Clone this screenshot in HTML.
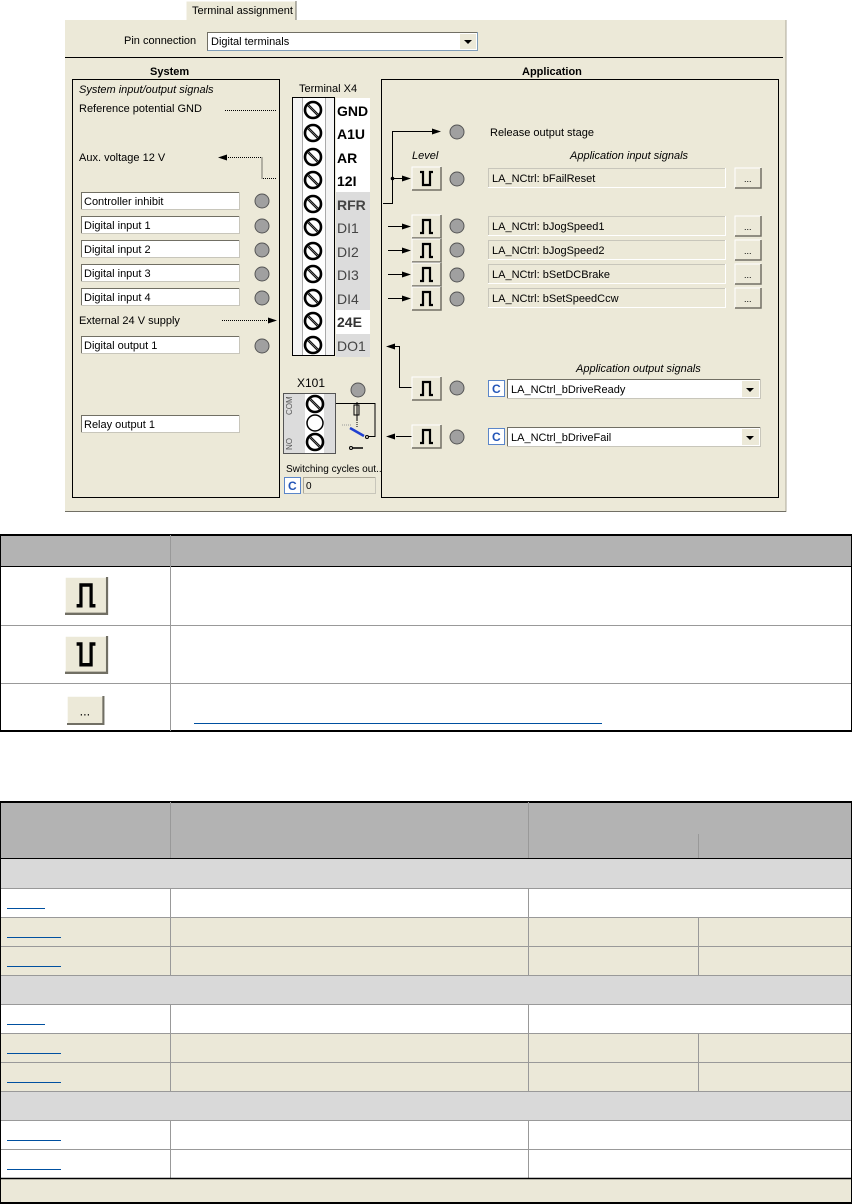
<!DOCTYPE html>
<html><head><meta charset="utf-8"><style>
body{margin:0;background:#fff;width:852px;height:1204px;position:relative;overflow:hidden;font-family:"Liberation Sans",sans-serif}
svg{position:absolute;left:0;top:0}
</style></head><body>
<svg width="852" height="1204" xmlns="http://www.w3.org/2000/svg" font-family="Liberation Sans, sans-serif" font-size="11">
<defs>
<g id="scr"><circle r="8" fill="#fff" stroke="#000" stroke-width="2.6"/><line x1="-5" y1="-5" x2="5" y2="5" stroke="#000" stroke-width="2.6"/><line x1="-5" y1="-5" x2="5" y2="5" stroke="#888" stroke-width="0.8"/></g>
<g id="led"><circle r="7" fill="#a0a0a0" stroke="#555" stroke-width="1"/></g>
<g id="btn"><rect x="0" y="0" width="29" height="23" fill="#ece9d8"/><path d="M0 23V0H29" stroke="#fff" fill="none"/><path d="M0 23H29V0" stroke="#716f64" fill="none" stroke-width="1.5"/></g>
<g id="hi"><use href="#btn"/><path d="M8 18H11V5H18V18H21" stroke="#000" stroke-width="2.2" fill="none"/></g>
<g id="lo"><use href="#btn"/><path d="M8 5H11V18H18V5H21" stroke="#000" stroke-width="2.2" fill="none"/></g>
<g id="dots"><rect width="26" height="20" fill="#ece9d8"/><path d="M0 20V0H26" stroke="#fff" fill="none"/><path d="M0 20H26V0" stroke="#716f64" fill="none" stroke-width="1.5"/><text x="9" y="14" font-size="9">...</text></g>
<g id="arr"><path d="M0 0L-9 -3V3Z" fill="#000"/></g>
<g id="cb"><rect x="0.5" y="0.5" width="16" height="16" fill="#fff" stroke="#5b86c9"/><text x="4" y="13" font-size="12" font-weight="bold" fill="#2456b8">C</text></g>
</defs>

<rect x="65" y="20" width="721" height="492" fill="#ece9d8"/>
<line x1="786" y1="20" x2="786" y2="512" stroke="#aca899"/>
<line x1="65" y1="511.5" x2="786" y2="511.5" stroke="#716f64"/>
<rect x="186" y="1" width="110" height="20" fill="#ece9d8"/>
<path d="M186 20V1H296" stroke="#fff" fill="none"/><path d="M296 1V20" stroke="#716f64"/>
<text x="192" y="14">Terminal assignment</text>

<text x="124" y="44">Pin connection</text>
<rect x="207.5" y="32.5" width="270" height="18" fill="#fff" stroke="#7f9db9"/>
<path d="M207.5 50.5V32.5H477" stroke="#716f64" fill="none"/>
<text x="211" y="45">Digital terminals</text>
<rect x="460" y="34" width="16" height="15" fill="#ece9d8"/><path d="M464 40h8l-4 4z" fill="#000"/>
<line x1="65" y1="57.5" x2="783" y2="57.5" stroke="#000"/>

<text x="150" y="75" font-weight="bold">System</text>
<text x="522" y="75" font-weight="bold">Application</text>
<rect x="72.5" y="79.5" width="207" height="418" fill="none" stroke="#000"/>
<rect x="381.5" y="79.5" width="397" height="418" fill="none" stroke="#000"/>

<text x="79" y="93" font-style="italic">System input/output signals</text>
<text x="79" y="112">Reference potential GND</text>
<line x1="225" y1="110.5" x2="277" y2="110.5" stroke="#000" stroke-dasharray="1 1"/>
<text x="79" y="161">Aux. voltage 12 V</text>
<path d="M226 157.5H262V178.5H277" stroke="#000" fill="none" stroke-dasharray="1 1"/><use href="#arr" transform="translate(218 157.5) rotate(180)"/>
<g>
<rect x="81.5" y="192.5" width="158" height="17" fill="#fff" stroke="#c8c6bb"/><path d="M81.5 209V192.5H239" stroke="#716f64" fill="none"/><text x="84" y="205">Controller inhibit</text>
<rect x="81.5" y="216.5" width="158" height="17" fill="#fff" stroke="#c8c6bb"/><path d="M81.5 233V216.5H239" stroke="#716f64" fill="none"/><text x="84" y="229">Digital input 1</text>
<rect x="81.5" y="240.5" width="158" height="17" fill="#fff" stroke="#c8c6bb"/><path d="M81.5 257V240.5H239" stroke="#716f64" fill="none"/><text x="84" y="253">Digital input 2</text>
<rect x="81.5" y="264.5" width="158" height="17" fill="#fff" stroke="#c8c6bb"/><path d="M81.5 281V264.5H239" stroke="#716f64" fill="none"/><text x="84" y="277">Digital input 3</text>
<rect x="81.5" y="288.5" width="158" height="17" fill="#fff" stroke="#c8c6bb"/><path d="M81.5 305V288.5H239" stroke="#716f64" fill="none"/><text x="84" y="301">Digital input 4</text>
<rect x="81.5" y="336.5" width="158" height="17" fill="#fff" stroke="#c8c6bb"/><path d="M81.5 353V336.5H239" stroke="#716f64" fill="none"/><text x="84" y="349">Digital output 1</text>
<rect x="81.5" y="415.5" width="158" height="17" fill="#fff" stroke="#c8c6bb"/><path d="M81.5 432V415.5H239" stroke="#716f64" fill="none"/><text x="84" y="428">Relay output 1</text>
</g>
<use href="#led" x="262" y="201"/><use href="#led" x="262" y="226"/><use href="#led" x="262" y="250"/><use href="#led" x="262" y="274"/><use href="#led" x="262" y="298"/><use href="#led" x="262" y="346"/>
<text x="79" y="324">External 24 V supply</text>
<line x1="222" y1="320.5" x2="268" y2="320.5" stroke="#000" stroke-dasharray="1 1"/><use href="#arr" x="277" y="320.5"/>

<text x="299" y="92">Terminal  X4</text>
<rect x="336" y="98" width="34" height="94" fill="#fff"/>
<rect x="336" y="192" width="34" height="118" fill="#dcdcdc"/>
<rect x="336" y="310" width="34" height="24" fill="#fff"/>
<rect x="336" y="334" width="34" height="23" fill="#dcdcdc"/>
<rect x="292.5" y="97.5" width="42" height="258" fill="#fff" stroke="#000"/>
<rect x="293" y="98" width="9" height="257" fill="#f4f4f4"/><rect x="325" y="98" width="9" height="257" fill="#f4f4f4"/>
<line x1="302.5" y1="98" x2="302.5" y2="355" stroke="#aaa"/><line x1="325.5" y1="98" x2="325.5" y2="355" stroke="#aaa"/>
<g font-size="14" font-weight="bold" fill="#000">
<use href="#scr" x="313" y="110"/><text x="337" y="116">GND</text>
<use href="#scr" x="313" y="133"/><text x="337" y="139">A1U</text>
<use href="#scr" x="313" y="157"/><text x="337" y="163">AR</text>
<use href="#scr" x="313" y="180"/><text x="337" y="186">12I</text>
<use href="#scr" x="313" y="204"/><text x="337" y="210" fill="#444">RFR</text>
<use href="#scr" x="313" y="227"/><text x="337" y="233" fill="#444" font-weight="normal">DI1</text>
<use href="#scr" x="313" y="251"/><text x="337" y="257" fill="#444" font-weight="normal">DI2</text>
<use href="#scr" x="313" y="274"/><text x="337" y="280" fill="#444" font-weight="normal">DI3</text>
<use href="#scr" x="313" y="298"/><text x="337" y="304" fill="#444" font-weight="normal">DI4</text>
<use href="#scr" x="313" y="321"/><text x="337" y="327" fill="#333">24E</text>
<use href="#scr" x="313" y="345"/><text x="337" y="351" fill="#444" font-weight="normal">DO1</text>
</g>

<text x="297" y="387" font-size="12">X101</text>
<use href="#led" x="358" y="390"/>
<rect x="283.5" y="393.5" width="52" height="60" fill="#dcdcdc" stroke="#555"/>
<rect x="305" y="394" width="19" height="59" fill="#fff"/>
<use href="#scr" x="315" y="404"/><circle cx="315" cy="423" r="8" fill="#fff" stroke="#000" stroke-width="1.5"/><use href="#scr" x="315" y="442"/>
<text transform="translate(292 415) rotate(-90)" font-size="8" fill="#555">COM</text>
<text transform="translate(292 450) rotate(-90)" font-size="8" fill="#555">NO</text>
<path d="M336 403.5H375V436.5H368" stroke="#000" fill="none"/>
<rect x="354" y="405" width="5" height="10" fill="none" stroke="#000"/><line x1="357" y1="402" x2="357" y2="420" stroke="#000"/>
<line x1="357" y1="420" x2="357" y2="428" stroke="#000" stroke-dasharray="1 1"/>
<line x1="350" y1="428" x2="364" y2="436" stroke="#2040d0" stroke-width="2.5"/>
<circle cx="367" cy="437" r="1.5" fill="none" stroke="#000"/>
<line x1="342" y1="425" x2="352" y2="425" stroke="#999" stroke-dasharray="1 1"/>
<circle cx="351" cy="448" r="1.5" fill="none" stroke="#000"/>
<path d="M352 448H363" stroke="#000" stroke-width="1.5"/>
<text x="286" y="472" font-size="10">Switching cycles out..</text>
<use href="#cb" x="284" y="477"/>
<rect x="303.5" y="477.5" width="72" height="16" fill="#ece9d8" stroke="#c8c6bb"/><path d="M303.5 493V477.5H375" stroke="#aca899" fill="none"/><text x="306" y="489" font-size="10">0</text>

<path d="M383 203.5H392.5V131.5H432" stroke="#000" fill="none"/><use href="#arr" x="441" y="131.5"/>
<use href="#led" x="457" y="132"/>
<text x="490" y="136">Release output stage</text>
<text x="412" y="159" font-style="italic">Level</text>
<text x="570" y="159" font-style="italic">Application input signals</text>
<circle cx="392.5" cy="178.5" r="1.8" fill="#000"/>
<line x1="392" y1="178.5" x2="403" y2="178.5" stroke="#000"/><use href="#arr" x="411" y="178.5"/>
<use href="#lo" x="412" y="167"/><use href="#led" x="457" y="179"/>
<g>
<line x1="388" y1="226.5" x2="403" y2="226.5" stroke="#000"/><use href="#arr" x="411" y="226.5"/><use href="#hi" x="412" y="215"/><use href="#led" x="457" y="226"/>
<line x1="388" y1="250.5" x2="403" y2="250.5" stroke="#000"/><use href="#arr" x="411" y="250.5"/><use href="#hi" x="412" y="239"/><use href="#led" x="457" y="250"/>
<line x1="388" y1="274.5" x2="403" y2="274.5" stroke="#000"/><use href="#arr" x="411" y="274.5"/><use href="#hi" x="412" y="263"/><use href="#led" x="457" y="275"/>
<line x1="388" y1="298.5" x2="403" y2="298.5" stroke="#000"/><use href="#arr" x="411" y="298.5"/><use href="#hi" x="412" y="287"/><use href="#led" x="457" y="299"/>
</g>
<g>
<rect x="488.5" y="168.5" width="237" height="19" fill="#ece9d8" stroke="#fff"/><path d="M488.5 187V168.5H725" stroke="#c8c6bb" fill="none"/><text x="492" y="182">LA_NCtrl: bFailReset</text>
<rect x="488.5" y="216.5" width="237" height="19" fill="#ece9d8" stroke="#fff"/><path d="M488.5 235V216.5H725" stroke="#c8c6bb" fill="none"/><text x="492" y="230">LA_NCtrl: bJogSpeed1</text>
<rect x="488.5" y="240.5" width="237" height="19" fill="#ece9d8" stroke="#fff"/><path d="M488.5 259V240.5H725" stroke="#c8c6bb" fill="none"/><text x="492" y="254">LA_NCtrl: bJogSpeed2</text>
<rect x="488.5" y="264.5" width="237" height="19" fill="#ece9d8" stroke="#fff"/><path d="M488.5 283V264.5H725" stroke="#c8c6bb" fill="none"/><text x="492" y="278">LA_NCtrl: bSetDCBrake</text>
<rect x="488.5" y="288.5" width="237" height="19" fill="#ece9d8" stroke="#fff"/><path d="M488.5 307V288.5H725" stroke="#c8c6bb" fill="none"/><text x="492" y="302">LA_NCtrl: bSetSpeedCcw</text>
</g>
<use href="#dots" x="735" y="168"/><use href="#dots" x="735" y="216"/><use href="#dots" x="735" y="240"/><use href="#dots" x="735" y="264"/><use href="#dots" x="735" y="288"/>

<use href="#arr" transform="translate(386 346.5) rotate(180)"/>
<path d="M394 346.5H399.5V387.5H412" stroke="#000" fill="none"/>
<text x="576" y="372" font-style="italic">Application output signals</text>
<use href="#hi" x="412" y="377"/><use href="#led" x="457" y="388"/>
<use href="#cb" x="488" y="380"/>
<rect x="507.5" y="379.5" width="253" height="19" fill="#fff" stroke="#c8c6bb"/><path d="M507.5 398V379.5H760" stroke="#716f64" fill="none"/>
<text x="511" y="393">LA_NCtrl_bDriveReady</text>
<rect x="742" y="381" width="17" height="16" fill="#ece9d8"/><path d="M746 388h8l-4 4z" fill="#000"/>
<line x1="396" y1="436.5" x2="412" y2="436.5" stroke="#000"/><use href="#arr" transform="translate(386 436.5) rotate(180)"/>
<use href="#hi" x="412" y="425"/><use href="#led" x="457" y="437"/>
<use href="#cb" x="488" y="428"/>
<rect x="507.5" y="427.5" width="253" height="19" fill="#fff" stroke="#c8c6bb"/><path d="M507.5 446V427.5H760" stroke="#716f64" fill="none"/>
<text x="511" y="441">LA_NCtrl_bDriveFail</text>
<rect x="742" y="429" width="17" height="16" fill="#ece9d8"/><path d="M746 436h8l-4 4z" fill="#000"/>

<!-- table 1 -->
<rect x="0" y="535" width="852" height="31" fill="#b3b3b3"/>
<line x1="0" y1="535" x2="852" y2="535" stroke="#000" stroke-width="2"/>
<line x1="0" y1="566.5" x2="852" y2="566.5" stroke="#000" stroke-width="1"/>
<line x1="0" y1="625.5" x2="852" y2="625.5" stroke="#999"/>
<line x1="0" y1="683.5" x2="852" y2="683.5" stroke="#999"/>
<line x1="0" y1="731" x2="852" y2="731" stroke="#000" stroke-width="2"/>
<line x1="0.5" y1="535" x2="0.5" y2="732" stroke="#000"/>
<line x1="851.5" y1="535" x2="851.5" y2="732" stroke="#000"/>
<line x1="170.5" y1="535" x2="170.5" y2="731" stroke="#999"/>
<use href="#hi" transform="translate(65 577) scale(1.45 1.6)"/>
<use href="#lo" transform="translate(65 636) scale(1.45 1.6)"/>
<use href="#dots" transform="translate(67 696) scale(1.4)"/>
<line x1="194" y1="723.5" x2="602" y2="723.5" stroke="#0050a0"/>

<!-- table 2 -->
<rect x="0" y="802" width="852" height="57" fill="#b3b3b3"/>
<line x1="0" y1="802" x2="852" y2="802" stroke="#000" stroke-width="2"/>
<line x1="0" y1="858.5" x2="852" y2="858.5" stroke="#000"/>
<rect x="0" y="859" width="852" height="29" fill="#d9d9d9"/>
<rect x="0" y="889" width="852" height="29" fill="#fff"/>
<rect x="0" y="918" width="852" height="57" fill="#ebe8d8"/>
<rect x="0" y="975" width="852" height="29" fill="#d9d9d9"/>
<rect x="0" y="1005" width="852" height="28" fill="#fff"/>
<rect x="0" y="1033" width="852" height="58" fill="#ebe8d8"/>
<rect x="0" y="1091" width="852" height="29" fill="#d9d9d9"/>
<rect x="0" y="1120" width="852" height="58" fill="#fff"/>
<rect x="0" y="1179" width="852" height="25" fill="#ebe8d8"/>
<g stroke="#999">
<line x1="0" y1="888.5" x2="852" y2="888.5"/><line x1="0" y1="917.5" x2="852" y2="917.5"/><line x1="0" y1="946.5" x2="852" y2="946.5"/><line x1="0" y1="975.5" x2="852" y2="975.5"/>
<line x1="0" y1="1004.5" x2="852" y2="1004.5"/><line x1="0" y1="1033.5" x2="852" y2="1033.5"/><line x1="0" y1="1062.5" x2="852" y2="1062.5"/><line x1="0" y1="1091.5" x2="852" y2="1091.5"/>
<line x1="0" y1="1120.5" x2="852" y2="1120.5"/><line x1="0" y1="1149.5" x2="852" y2="1149.5"/>
<line x1="170.5" y1="802" x2="170.5" y2="858"/><line x1="528.5" y1="802" x2="528.5" y2="858"/><line x1="698.5" y1="834" x2="698.5" y2="858"/>
<line x1="170.5" y1="889" x2="170.5" y2="975"/><line x1="528.5" y1="889" x2="528.5" y2="975"/><line x1="698.5" y1="918" x2="698.5" y2="975"/>
<line x1="170.5" y1="1005" x2="170.5" y2="1091"/><line x1="528.5" y1="1005" x2="528.5" y2="1091"/><line x1="698.5" y1="1033" x2="698.5" y2="1091"/>
<line x1="170.5" y1="1120" x2="170.5" y2="1179"/><line x1="528.5" y1="1120" x2="528.5" y2="1179"/>
</g>
<line x1="0" y1="1178.5" x2="852" y2="1178.5" stroke="#000" stroke-width="1.5"/>
<line x1="0" y1="1203" x2="852" y2="1203" stroke="#000" stroke-width="2"/>
<line x1="0.5" y1="802" x2="0.5" y2="1204" stroke="#000"/><line x1="851.5" y1="802" x2="851.5" y2="1204" stroke="#000"/>
<g stroke="#0050a0">
<line x1="7" y1="908.5" x2="45" y2="908.5"/><line x1="7" y1="937.5" x2="61" y2="937.5"/><line x1="7" y1="966.5" x2="61" y2="966.5"/>
<line x1="7" y1="1024.5" x2="45" y2="1024.5"/><line x1="7" y1="1053.5" x2="61" y2="1053.5"/><line x1="7" y1="1082.5" x2="61" y2="1082.5"/>
<line x1="7" y1="1140.5" x2="61" y2="1140.5"/><line x1="7" y1="1169.5" x2="61" y2="1169.5"/>
</g>
</svg>
</body></html>
